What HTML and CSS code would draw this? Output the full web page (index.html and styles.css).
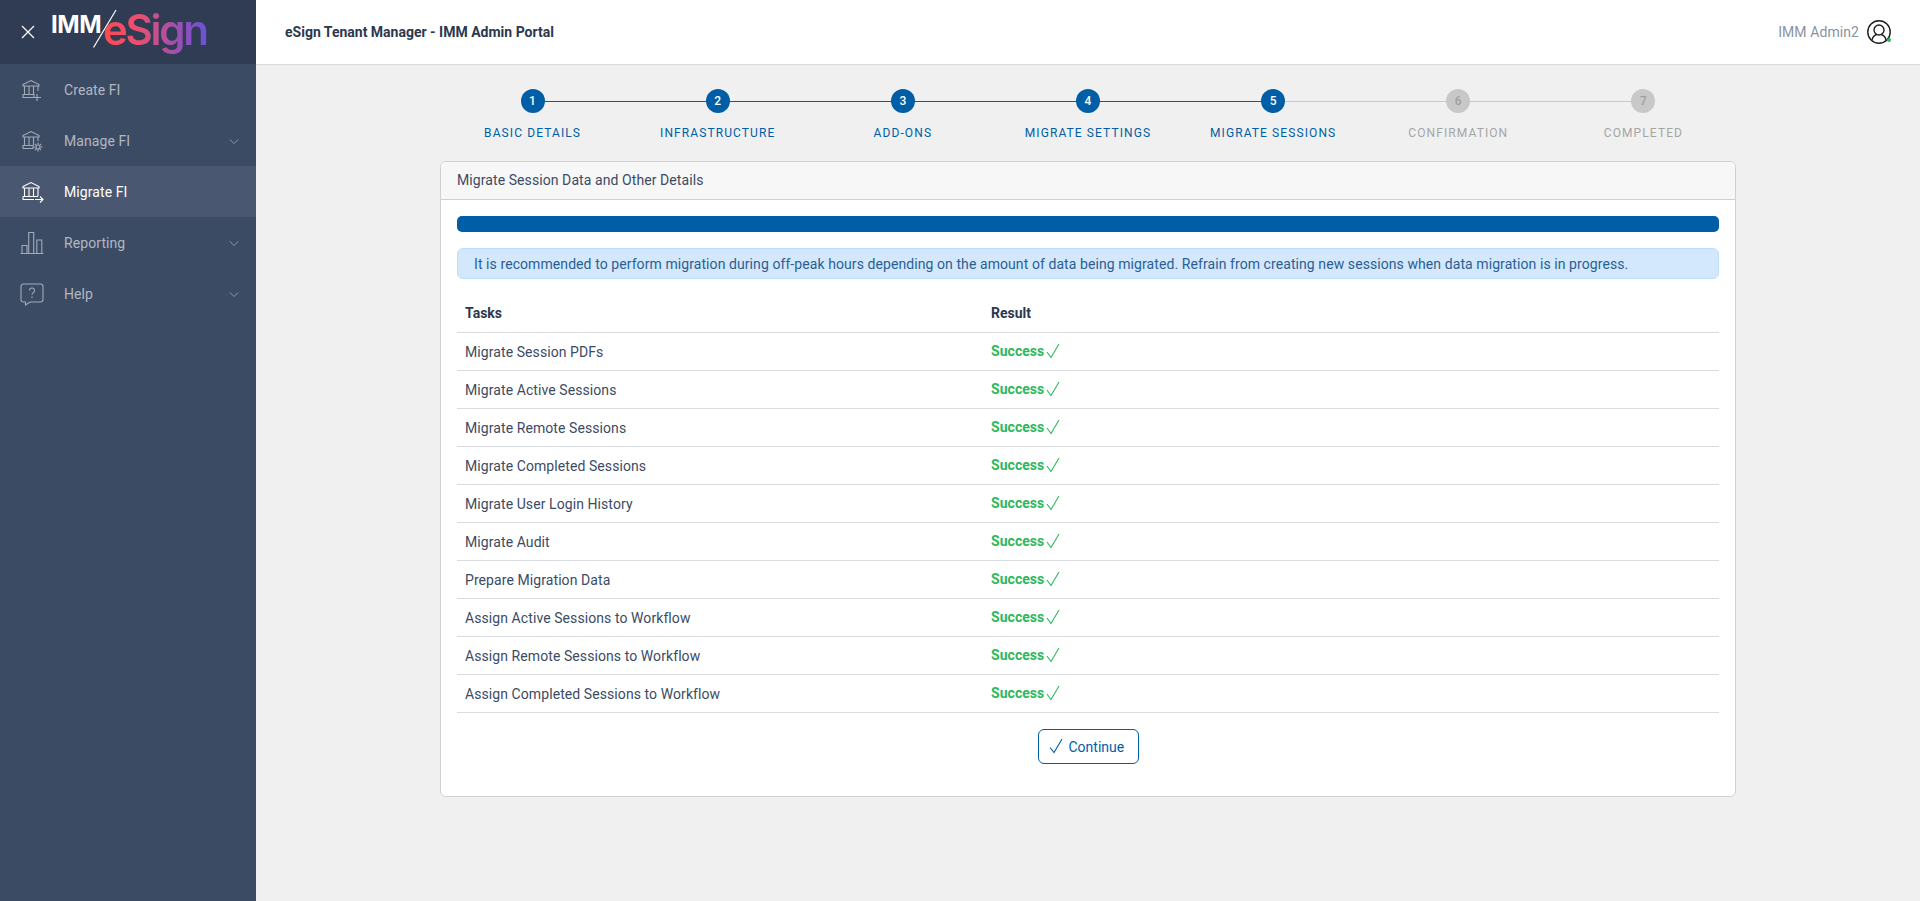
FILE: index.html
```html
<!DOCTYPE html>
<html lang="en">
<head>
<meta charset="utf-8">
<title>eSign Tenant Manager - IMM Admin Portal</title>
<link rel="stylesheet" href="styles.css">
</head>
<body>
<div class="app">
  <aside class="sidebar">
    <div class="brand">
      <svg class="close-icon" viewBox="0 0 14 14" width="14" height="14"><path d="M1 1l12 12M13 1L1 13"/></svg>
      <div class="logo">
        <span class="logo-imm">IMM</span>
        <svg class="logo-slash" viewBox="0 0 26 40" width="26" height="40"><path d="M24 1L1.500 38.500"/></svg>
        <span class="logo-esign">eSign</span>
      </div>
    </div>
    <nav class="nav">
      <a class="nav-item">
        <svg class="nav-icon" viewBox="0 0 24 24" width="24" height="24"><path d="M3 6.500L11 2.500l8 4v1.500H3zM4.500 8v8M9 8v8M13.500 8v8M18 8v5M3 16.500h11v3H3zM17 16v7M13.500 19.500h7.500"/></svg>
        <span>Create FI</span>
      </a>
      <a class="nav-item">
        <svg class="nav-icon" viewBox="0 0 24 24" width="24" height="24"><path d="M3 6.500L11 2.500l8 4v1.500H3zM4.500 8v8M9 8v8M13.500 8v8M18 8v4M3 16.500h10v3H3z"/><circle cx="18" cy="18" r="2"/><path d="M18 13.500v2M18 20.500v2M13.500 18h2M20.500 18h2M15 15l1.300 1.300M19.700 19.700L21 21M21 15l-1.300 1.300M16.300 19.700L15 21"/></svg>
        <span>Manage FI</span>
        <svg class="chevron" viewBox="0 0 12 8" width="10" height="7"><path d="M1 1.500l5 5 5-5"/></svg>
      </a>
      <a class="nav-item active">
        <svg class="nav-icon" viewBox="0 0 24 24" width="24" height="24"><path d="M3 6.500L11 2.500l8 4v1.500H3zM4.500 8v8M9 8v8M13.500 8v8M18 8v8M3 16.500h15M3 16.500v3h11M15 19.500h8M20 16.500l3 3-3 3"/></svg>
        <span>Migrate FI</span>
      </a>
      <a class="nav-item">
        <svg class="nav-icon" viewBox="0 0 24 24" width="24" height="24"><path d="M0.500 22.500h23M2 22v-7.500h5V22M8.700 22V1.500h5V22M16.800 22V9h5v13"/></svg>
        <span>Reporting</span>
        <svg class="chevron" viewBox="0 0 12 8" width="10" height="7"><path d="M1 1.500l5 5 5-5"/></svg>
      </a>
      <a class="nav-item">
        <svg class="nav-icon" viewBox="0 0 24 24" width="24" height="24"><path d="M3.500 2h17a2.500 2.500 0 0 1 2.500 2.500v13a2.500 2.500 0 0 1-2.500 2.500H10l-4.500 3v-3H3.500A2.500 2.500 0 0 1 1 17.500v-13A2.500 2.500 0 0 1 3.500 2z"/><path d="M9.500 8.500a2.500 2.500 0 1 1 3.800 2.100c-.9.600-1.300 1.100-1.300 2.100M12 14.500v1.500"/></svg>
        <span>Help</span>
        <svg class="chevron" viewBox="0 0 12 8" width="10" height="7"><path d="M1 1.500l5 5 5-5"/></svg>
      </a>
    </nav>
  </aside>
  <div class="main">
    <header class="topbar">
      <div class="title">eSign Tenant Manager - IMM Admin Portal</div>
      <div class="user">
        <span class="user-name">IMM Admin2</span>
        <span class="avatar">
          <svg viewBox="0 0 24 24" width="24" height="24"><circle cx="12" cy="12" r="11.200"/><circle cx="12" cy="10" r="5"/><path d="M5 20c.6-3 2.600-4.800 4.600-5.500M19 20c-.6-3-2.600-4.800-4.600-5.500"/></svg>
          <i class="status-dot"></i>
        </span>
      </div>
    </header>
    <main class="content">
      <ol class="stepper">
        <li class="step done"><span class="step-num">1</span><span class="step-label">Basic Details</span></li>
        <li class="step done"><span class="step-num">2</span><span class="step-label">Infrastructure</span></li>
        <li class="step done"><span class="step-num">3</span><span class="step-label">Add-ons</span></li>
        <li class="step done"><span class="step-num">4</span><span class="step-label">Migrate Settings</span></li>
        <li class="step current"><span class="step-num">5</span><span class="step-label">Migrate Sessions</span></li>
        <li class="step"><span class="step-num">6</span><span class="step-label">Confirmation</span></li>
        <li class="step"><span class="step-num">7</span><span class="step-label">Completed</span></li>
      </ol>
      <section class="card">
        <div class="card-header">Migrate Session Data and Other Details</div>
        <div class="card-body">
          <div class="progress"><div class="progress-bar"></div></div>
          <div class="alert">It is recommended to perform migration during off-peak hours depending on the amount of data being migrated. Refrain from creating new sessions when data migration is in progress.</div>
          <table class="tasks">
            <thead><tr><th class="col-task">Tasks</th><th>Result</th></tr></thead>
            <tbody>
              <tr><td>Migrate Session PDFs</td><td><span class="success">Success<svg class="tick" viewBox="0 0 14 16" width="14" height="16"><path d="M1 9l4 5.500L13 1"/></svg></span></td></tr>
              <tr><td>Migrate Active Sessions</td><td><span class="success">Success<svg class="tick" viewBox="0 0 14 16" width="14" height="16"><path d="M1 9l4 5.500L13 1"/></svg></span></td></tr>
              <tr><td>Migrate Remote Sessions</td><td><span class="success">Success<svg class="tick" viewBox="0 0 14 16" width="14" height="16"><path d="M1 9l4 5.500L13 1"/></svg></span></td></tr>
              <tr><td>Migrate Completed Sessions</td><td><span class="success">Success<svg class="tick" viewBox="0 0 14 16" width="14" height="16"><path d="M1 9l4 5.500L13 1"/></svg></span></td></tr>
              <tr><td>Migrate User Login History</td><td><span class="success">Success<svg class="tick" viewBox="0 0 14 16" width="14" height="16"><path d="M1 9l4 5.500L13 1"/></svg></span></td></tr>
              <tr><td>Migrate Audit</td><td><span class="success">Success<svg class="tick" viewBox="0 0 14 16" width="14" height="16"><path d="M1 9l4 5.500L13 1"/></svg></span></td></tr>
              <tr><td>Prepare Migration Data</td><td><span class="success">Success<svg class="tick" viewBox="0 0 14 16" width="14" height="16"><path d="M1 9l4 5.500L13 1"/></svg></span></td></tr>
              <tr><td>Assign Active Sessions to Workflow</td><td><span class="success">Success<svg class="tick" viewBox="0 0 14 16" width="14" height="16"><path d="M1 9l4 5.500L13 1"/></svg></span></td></tr>
              <tr><td>Assign Remote Sessions to Workflow</td><td><span class="success">Success<svg class="tick" viewBox="0 0 14 16" width="14" height="16"><path d="M1 9l4 5.500L13 1"/></svg></span></td></tr>
              <tr><td>Assign Completed Sessions to Workflow</td><td><span class="success">Success<svg class="tick" viewBox="0 0 14 16" width="14" height="16"><path d="M1 9l4 5.500L13 1"/></svg></span></td></tr>
            </tbody>
          </table>
          <div class="actions">
            <button class="btn" type="button"><svg class="btn-tick" viewBox="0 0 14 16" width="14" height="16"><path d="M1 9.500l4 5L13 1"/></svg><span class="btn-text">Continue</span></button>
          </div>
        </div>
      </section>
    </main>
  </div>
</div>
</body>
</html>
```
FILE: styles.css
```css
* { box-sizing: border-box; }
html, body { margin: 0; padding: 0; height: 100%; }
body {
  font-family: Roboto, "Liberation Sans", sans-serif;
  font-size: 14px;
  line-height: 1.5;
  letter-spacing: .08px;
  color: #3c4b64;
  background: #f0f0f0;
}
.app { display: flex; height: 901px; overflow: hidden; }

/* Sidebar */
.sidebar { width: 256px; flex: none; background: #3c4b64; }
.brand {
  height: 64px;
  background: #303c54;
  display: flex;
  align-items: center;
  padding-left: 21px;
  gap: 16px;
}
.close-icon { fill: none; stroke: #fff; stroke-width: 1.2; }
.logo { position: relative; display: flex; align-items: flex-start; height: 64px; width: 156px; }
.logo-imm {
  position: absolute; left: 0; top: 9px;
  font-family: Inter, sans-serif;
  font-weight: 700; font-size: 24px; line-height: 32px;
  letter-spacing: -.4px;
  color: #fff;
}
.logo-slash { position: absolute; left: 41px; top: 9px; fill: none; stroke: #fff; stroke-width: 1.2; }
.logo-esign {
  position: absolute; left: 52px; top: 4px;
  font-family: Inter, sans-serif;
  font-weight: 600; font-size: 42px; line-height: 52px;
  letter-spacing: -2.3px;
  background: linear-gradient(90deg, #ff4a4f 0%, #e85070 35%, #a04fae 70%, #6a51d8 100%);
  -webkit-background-clip: text;
  background-clip: text;
  color: transparent;
}
.nav { display: flex; flex-direction: column; }
.nav-item {
  height: 51px;
  display: flex;
  align-items: center;
  padding: 1px 16px 0 20px;
  color: #b1b7c1;
  font-size: 14px;
}
.nav-item.active { background: #4a5770; color: #fff; }
.nav-icon { flex: none; margin-right: 20px; fill: none; stroke: #a2aab7; stroke-width: 1.1; }
.nav-item.active .nav-icon { stroke: #fff; }
.chevron { margin-left: auto; margin-right: 1px; fill: none; stroke: #a2aab7; stroke-width: 1; }

/* Top bar */
.main { flex: 1; min-width: 0; display: flex; flex-direction: column; }
.topbar {
  height: 65px;
  background: #fff;
  border-bottom: 1px solid #d8dbe0;
  display: flex;
  align-items: center;
  justify-content: space-between;
  padding: 0 29px 0 29px;
}
.title { font-weight: 700; font-size: 14px; letter-spacing: 0; color: #2c384e; }
.user { display: flex; align-items: center; gap: 8px; }
.user-name { color: #8a93a2; font-size: 14px; }
.avatar { position: relative; display: block; width: 24px; height: 24px; }
.avatar svg { display: block; fill: none; stroke: #1f1f1f; stroke-width: 1.4; }
.status-dot {
  position: absolute; right: 0; bottom: 2px;
  width: 4px; height: 4px; border-radius: 50%;
  background: #2eb85c;
}

/* Content */
.content { width: 1296px; margin: 0 auto; padding-top: 24px; }
.stepper { display: flex; list-style: none; margin: 0 0 20px; padding: 0; }
.step {
  position: relative;
  flex: 1 1 0;
  display: flex;
  flex-direction: column;
  align-items: center;
  color: #a5a5a5;
}
.step:not(:last-child)::after {
  content: "";
  position: absolute;
  left: 50%; top: 12px;
  width: 100%; height: 1px;
  background: #c8c8c8;
}
.step.done:not(:last-child)::after { background: #005ea6; }
.step-num {
  position: relative; z-index: 1;
  width: 24px; height: 24px; border-radius: 50%;
  background: #c8c8c8;
  color: #a0a0a0;
  font-size: 12px; font-weight: 500; line-height: 24px;
  text-align: center;
}
.step.done .step-num, .step.current .step-num { background: #005ea6; color: #fff; }
.step.done, .step.current { color: #005ea6; }
.step-label {
  margin-top: 12px;
  font-size: 12px;
  line-height: 16px;
  letter-spacing: 1.1px;
  text-transform: uppercase;
}

/* Card */
.card {
  background: #fff;
  border: 1px solid #d0d0d0;
  border-radius: 6px;
  height: 636px;
}
.card-header {
  height: 38px;
  padding: 0 16px;
  line-height: 37px;
  background: #f7f7f7;
  border-bottom: 1px solid #d0d0d0;
  border-radius: 5px 5px 0 0;
  color: #3c4b64;
}
.card-body { padding: 16px; }
.progress { height: 16px; border-radius: 5px; background: #e0e0e0; overflow: hidden; }
.progress-bar { height: 100%; width: 100%; background: #005ea6; }
.alert {
  margin-top: 16px;
  height: 31px;
  padding: 0 16px;
  line-height: 30px;
  background: #d3e7fd;
  border: 1px solid #bfdcfb;
  border-radius: 6px;
  color: #2a5f93;
}
.tasks { width: 100%; margin-top: 16px; border-collapse: collapse; table-layout: fixed; }
.tasks th, .tasks td { height: 38px; padding: 0 8px; text-align: left; border-bottom: 1px solid #d8dbe0; }
.tasks td:first-child { padding-top: 2px; }
.tasks th { height: 37px; font-weight: 700; letter-spacing: 0; color: #2c384e; }
.tasks .col-task { width: 526px; }
.success { display: inline-flex; align-items: center; gap: 2px; font-weight: 700; letter-spacing: .05px; color: #2eb85c; }
.tick { fill: none; stroke: #2eb85c; stroke-width: 1.1; }
.actions { display: flex; justify-content: center; margin-top: 16px; }
.btn {
  display: inline-flex;
  align-items: center;
  gap: 6px;
  height: 35px;
  width: 101px;
  padding: 0 10px;
  background: #fff;
  border: 1px solid #005ea6;
  border-radius: 6px;
  color: #005ea6;
  font: inherit;
}
.btn-text { padding-top: 2px; }
.btn-tick { fill: none; stroke: #005ea6; stroke-width: 1.1; }
```
